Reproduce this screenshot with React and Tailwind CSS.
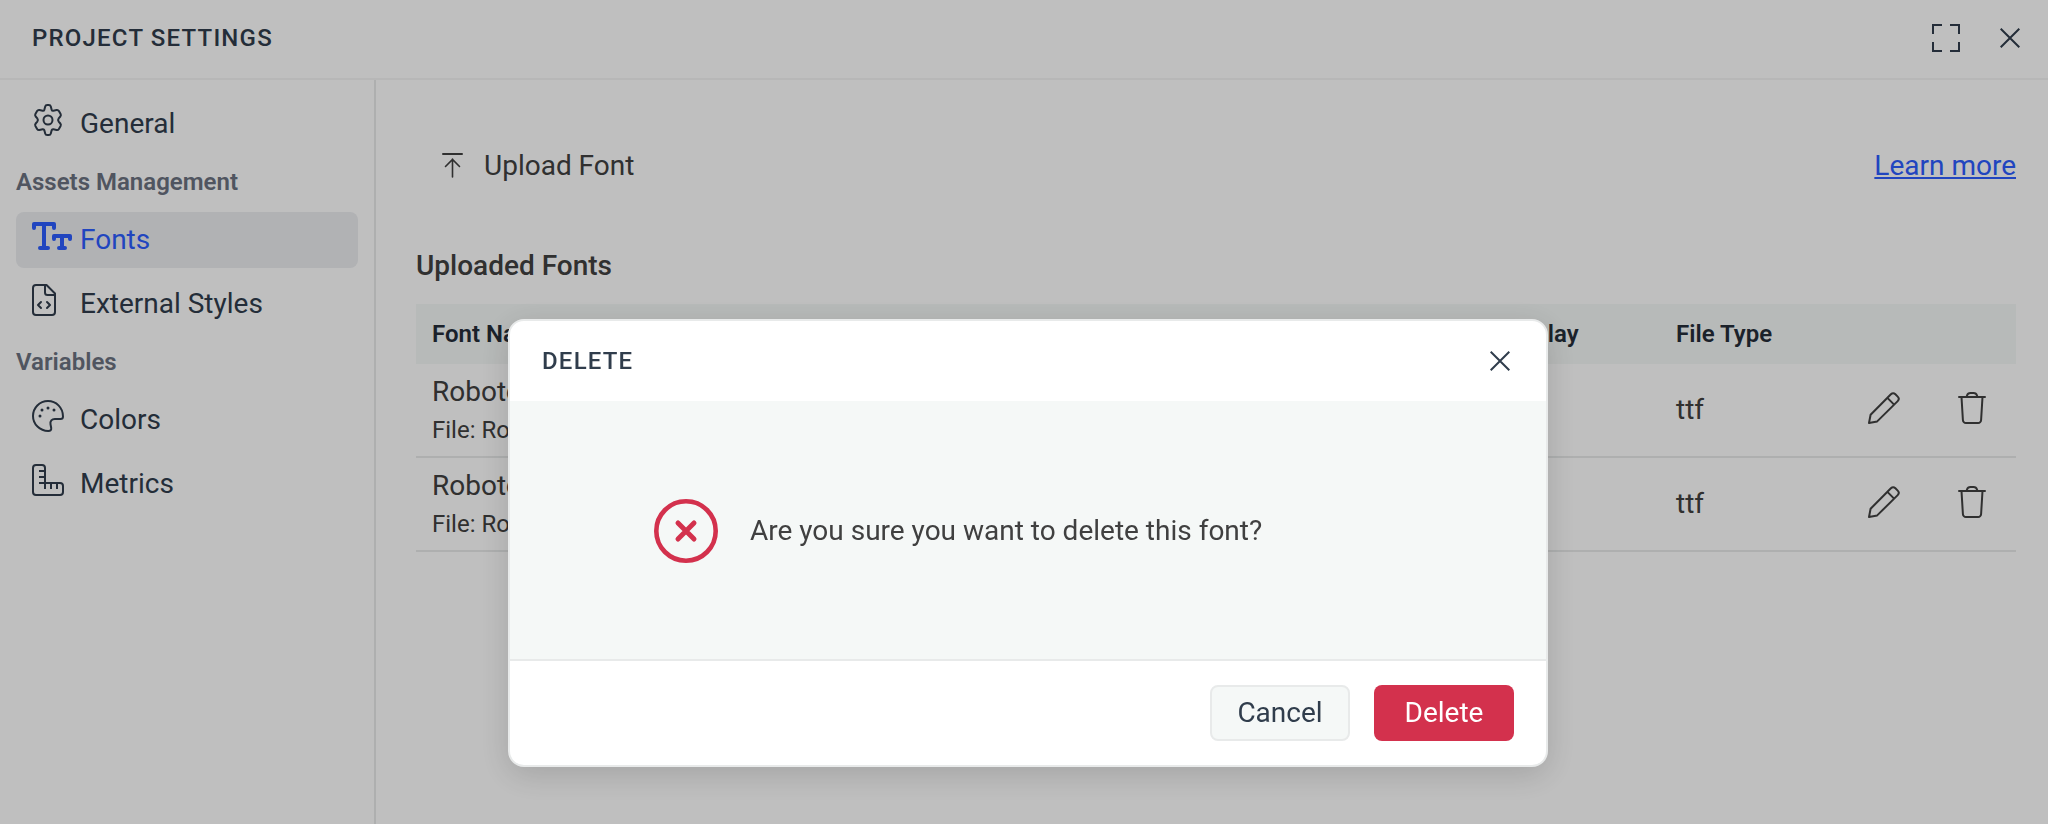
import { useState } from 'react';

const NAV = [
  { items: [{ id: 'general', label: 'General', icon: GearIcon }] },
  {
    title: 'Assets Management',
    items: [
      { id: 'fonts', label: 'Fonts', icon: FontsIcon },
      { id: 'styles', label: 'External Styles', icon: FileCodeIcon },
    ],
  },
  {
    title: 'Variables',
    items: [
      { id: 'colors', label: 'Colors', icon: PaletteIcon },
      { id: 'metrics', label: 'Metrics', icon: RulerIcon },
    ],
  },
];

const FONTS = [
  { id: 1, name: 'Roboto', file: 'Roboto.ttf', type: 'ttf' },
  { id: 2, name: 'Roboto', file: 'Roboto.ttf', type: 'ttf' },
];

function GearIcon() {
  return (
    <svg width="32" height="32" viewBox="0 0 32 32" fill="none" stroke="currentColor" strokeWidth="2" strokeLinejoin="round">
      <path d="M13.2 2.6Q13.6 1 15.2 1h1.6q1.6 0 2 1.6l.8 3q.4 1.3 1.7 1.1l3.3-.7q1.500-.3 2.300 1.100l1.700 2.900q.7 1.300-.3 2.500l-1.600 1.900q-1.200 1.600 0 3.200l1.600 1.900q1 1.200.3 2.500l-1.700 2.900q-.8 1.400-2.300 1.100l-3.300-.7q-1.300-.2-1.700 1.100l-.8 3q-.4 1.600-2 1.600h-1.600q-1.600 0-2-1.600l-.8-3q-.4-1.300-1.700-1.100l-3.300.7q-1.500.3-2.300-1.100l-1.700-2.900q-.7-1.300.3-2.500l1.600-1.900q1.200-1.600 0-3.200l-1.600-1.900q-1-1.200-.3-2.500l1.700-2.900Q5.900 5.700 7.400 6l3.300.7q1.300.2 1.700-1.100z" />
      <circle cx="16" cy="16" r="4.5" />
    </svg>
  );
}

function FontsIcon() {
  return (
    <svg width="40" height="32" viewBox="0 0 40 32" fill="none" stroke="currentColor" strokeWidth="4" strokeLinecap="round" strokeLinejoin="round">
      <path d="M2 8V4h20v4M12 4v24M8 28h8M22 19v-3h16v3M30 16v12M27 28h6" />
    </svg>
  );
}

function FileCodeIcon() {
  return (
    <svg width="32" height="32" viewBox="0 0 32 32" fill="none" stroke="currentColor" strokeWidth="2" strokeLinecap="round" strokeLinejoin="round">
      <path d="M4 1h10.500L23 9.500V28a3 3 0 0 1-3 3H4a3 3 0 0 1-3-3V4a3 3 0 0 1 3-3z" />
      <path d="M13 1v7.500a2.500 2.500 0 0 0 2.500 2.500H23" />
      <path d="M9 18l-3 3 3 3M15 18l3 3-3 3" />
    </svg>
  );
}

function PaletteIcon() {
  return (
    <svg width="32" height="32" viewBox="0 0 32 32" fill="none" stroke="currentColor" strokeWidth="2">
      <path d="M31 16.500C31 7.500 24 1 16 1 7.500 1 1 7.800 1 16s6.800 15 15.300 15c2.200 0 3.200-1.100 2.900-3l-.7-3.800c-.5-3 1.300-5.200 4.300-5.200h5.700c1.600 0 2.500-.9 2.500-2.500z" />
      <g fill="currentColor" stroke="none">
        <circle cx="8" cy="16" r="1.500" />
        <circle cx="10" cy="10" r="1.500" />
        <circle cx="16" cy="8" r="1.500" />
        <circle cx="22" cy="10" r="1.500" />
      </g>
    </svg>
  );
}

function RulerIcon() {
  return (
    <svg width="32" height="32" viewBox="0 0 32 32" fill="none" stroke="currentColor" strokeWidth="2">
      <path d="M4 1h6a3 3 0 0 1 3 3v15h15a3 3 0 0 1 3 3v6a3 3 0 0 1-3 3H4a3 3 0 0 1-3-3V4a3 3 0 0 1 3-3z" />
      <path d="M7 7h6M7 13h6M7 19h6M13 19v6M19 19v6M25 19v6" />
    </svg>
  );
}

function UploadIcon() {
  return (
    <svg width="24" height="28" viewBox="0 0 24 28" fill="none" stroke="currentColor" strokeWidth="2" strokeLinecap="round">
      <path d="M3 2h19" />
      <path d="M12.500 25V7M5.500 14.500l7-7 7 7" strokeWidth="1.600" />
    </svg>
  );
}

function ExpandIcon() {
  return (
    <svg width="28" height="28" viewBox="0 0 28 28" fill="none" stroke="currentColor" strokeWidth="2">
      <path d="M1 10V1h9M18 1h9v9M27 18v9h-9M10 27H1v-9" />
    </svg>
  );
}

function CloseIcon() {
  return (
    <svg width="20" height="20" viewBox="0 0 20 20" fill="none" stroke="currentColor" strokeWidth="2">
      <path d="M.7.7l18.600 18.600M19.300.7L.7 19.300" />
    </svg>
  );
}

function PencilIcon() {
  return (
    <svg width="32" height="32" viewBox="0 0 32 32" fill="none" stroke="currentColor" strokeWidth="2" strokeLinejoin="round">
      <path d="M1 31l1.600-8.200L22.900 2.300a3.200 3.200 0 0 1 4.500 0l2.300 2.300a3.200 3.200 0 0 1 0 4.500L9.200 29.400zM19.400 5.900l6.700 6.700" />
    </svg>
  );
}

function TrashIcon() {
  return (
    <svg width="28" height="32" viewBox="0 0 28 32" fill="none" stroke="currentColor" strokeWidth="2" strokeLinecap="round" strokeLinejoin="round">
      <path d="M1 5h26M8.500 5l.5-1.500A3.600 3.600 0 0 1 12.400 1h3.200A3.600 3.600 0 0 1 19 3.500l.5 1.500M3.500 5l1.400 23a3 3 0 0 0 3 3h12.200a3 3 0 0 0 3-3L24.500 5" />
    </svg>
  );
}

function ErrorIcon() {
  return (
    <svg width="64" height="64" viewBox="0 0 64 64" fill="none" stroke="currentColor" strokeLinecap="round">
      <circle cx="32" cy="32" r="29.700" strokeWidth="4.600" />
      <path d="M24 24l16 16M40 24L24 40" strokeWidth="5" />
    </svg>
  );
}

function Sidebar({ active, onSelect }) {
  return (
    <nav className="w-[376px] shrink-0 border-r-2 border-[#e8eaea] p-4">
      {NAV.map((group) => (
        <div key={group.items[0].id}>
          {group.title && (
            <h2 className="flex h-[60px] items-center text-2xl font-semibold text-[#6b7280]">{group.title}</h2>
          )}
          <div className="flex flex-col gap-2">
            {group.items.map(({ id, label, icon: Icon }) => (
              <button
                key={id}
                type="button"
                onClick={() => onSelect(id)}
                className={`flex w-full items-start rounded-lg px-4 py-2 text-[28px] leading-10 ${
                  active === id ? 'bg-[#eceef1] text-[#2c5dff]' : 'text-[#303d4c]'
                }`}
              >
                <span className="w-12 shrink-0">
                  <Icon />
                </span>
                {label}
              </button>
            ))}
          </div>
        </div>
      ))}
    </nav>
  );
}

function FontTable({ onDelete }) {
  return (
    <table className="w-full table-fixed text-left">
      <colgroup>
        <col />
        <col className="w-[176px]" />
        <col className="w-[180px]" />
        <col className="w-[88px]" />
        <col className="w-[88px]" />
      </colgroup>
      <thead>
        <tr className="h-[60px] bg-[#f5f8f7] text-2xl text-[#242d38]">
          <th className="px-4 font-semibold">Font Name</th>
          <th className="px-4 font-semibold">Display</th>
          <th className="px-4 font-semibold">File Type</th>
          <td />
          <td />
        </tr>
      </thead>
      <tbody>
        {FONTS.map((font) => (
          <tr key={font.id} className="border-b-2 border-[#e8eaea]">
            <td className="px-4 py-2">
              <div className="text-[28px] leading-10">{font.name}</div>
              <div className="text-2xl leading-9">File: {font.file}</div>
            </td>
            <td />
            <td className="px-4 text-[28px] leading-10">{font.type}</td>
            <td>
              <button type="button" aria-label="Edit font" className="flex w-full justify-center pb-1">
                <PencilIcon />
              </button>
            </td>
            <td>
              <button type="button" aria-label="Delete font" onClick={onDelete} className="flex w-full justify-center pb-1">
                <TrashIcon />
              </button>
            </td>
          </tr>
        ))}
      </tbody>
    </table>
  );
}

function DeleteDialog({ onClose }) {
  return (
    <div className="fixed inset-0 flex items-start justify-center bg-black/25 pt-[319px] pl-2">
      <div
        role="dialog"
        aria-modal="true"
        aria-labelledby="delete-title"
        className="w-full max-w-[1040px] overflow-hidden rounded-2xl border-2 border-[#e8eaea] bg-white shadow-[0_8px_32px_rgba(0,0,0,0.15)]"
      >
        <header className="flex h-20 items-center justify-between pr-6 pl-8">
          <h2 id="delete-title" className="text-2xl font-medium tracking-wider text-[#303d4c]">DELETE</h2>
          <button type="button" aria-label="Close dialog" onClick={onClose} className="flex size-11 items-center justify-center text-[#303d4c]">
            <CloseIcon />
          </button>
        </header>
        <div className="flex h-[258px] items-center gap-8 bg-[#f5f8f7] px-36 pt-0.5">
          <span className="text-[#d3314d]">
            <ErrorIcon />
          </span>
          <p className="text-[28px] leading-10">Are you sure you want to delete this font?</p>
        </div>
        <footer className="flex justify-end gap-6 border-t-2 border-[#e8eaea] px-8 py-6 text-[28px] leading-10">
          <button type="button" onClick={onClose} className="h-14 w-[140px] rounded-lg border-2 border-[#e8eaea] bg-[#f5f8f7] text-[#303d4c]">
            Cancel
          </button>
          <button type="button" onClick={onClose} className="h-14 w-[140px] rounded-lg bg-[#d3314d] text-white">
            Delete
          </button>
        </footer>
      </div>
    </div>
  );
}

function App() {
  const [active, setActive] = useState('fonts');
  const [confirmOpen, setConfirmOpen] = useState(true);

  return (
    <div className="flex min-h-screen flex-col bg-white font-[Roboto,sans-serif] text-[#404040]">
      <header className="flex h-20 items-center justify-between border-b-2 border-[#f5f5f5] pr-4 pb-0.5 pl-8 text-[#303d4c]">
        <h1 className="text-2xl font-medium tracking-wider">PROJECT SETTINGS</h1>
        <div className="flex gap-5">
          <button type="button" aria-label="Full screen" className="flex size-11 items-center justify-center">
            <ExpandIcon />
          </button>
          <button type="button" aria-label="Close settings" className="flex size-11 items-center justify-center">
            <CloseIcon />
          </button>
        </div>
      </header>

      <div className="flex flex-1">
        <Sidebar active={active} onSelect={setActive} />

        <main className="min-w-0 flex-1 pt-16 pr-8 pl-10">
          <div className="flex h-11 items-center justify-between text-[28px]">
            <button type="button" className="flex items-center gap-5 px-6">
              <UploadIcon />
              Upload Font
            </button>
            <a href="#learn-more" className="text-[#2c5dff] underline">Learn more</a>
          </div>
          <h2 className="mt-15 mb-5 text-[28px] leading-9 font-medium">Uploaded Fonts</h2>
          <FontTable onDelete={() => setConfirmOpen(true)} />
        </main>
      </div>

      {confirmOpen && <DeleteDialog onClose={() => setConfirmOpen(false)} />}
    </div>
  );
}

export default App;
